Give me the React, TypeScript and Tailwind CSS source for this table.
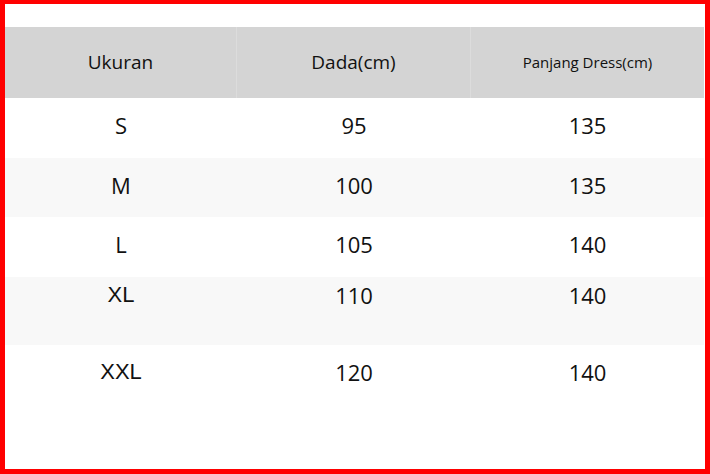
import React from "react";

const rows = [
  { size: "S", dada: "95", panjang: "135", bg: "bg-white", h: "h-[60px]", pt: "pt-[12px]" },
  { size: "M", dada: "100", panjang: "135", bg: "bg-[#f8f8f8]", h: "h-[59px]", pt: "pt-[12px]" },
  { size: "L", dada: "105", panjang: "140", bg: "bg-white", h: "h-[60px]", pt: "pt-[12px]" },
  { size: "XL", dada: "110", panjang: "140", bg: "bg-[#f8f8f8]", h: "h-[68px]", pt: "pt-[3px]" },
  { size: "XXL", dada: "120", panjang: "140", bg: "bg-white", h: "flex-1", pt: "pt-[12px]" },
];

export default function App() {
  return (
    <div className="w-[710px] h-[474px] bg-[#ff0000] pt-[4px] pl-[5px] pr-[5px] pb-[5px]">
      <div
        className="w-full h-full bg-white pt-[23px] pr-[1px] flex flex-col text-[#111]"
        style={{ fontFamily: '"Open Sans", "Noto Sans", sans-serif' }}
      >
        <div className="grid grid-cols-[232px_234px_1fr] h-[71px] bg-[#d4d4d4]">
          <div className="flex items-center justify-center text-[19px] border-r border-[#dcdcdc]">Ukuran</div>
          <div className="flex items-center justify-center text-[19px] border-r border-[#dcdcdc]">Dada(cm)</div>
          <div className="flex items-center justify-center text-[15px]">Panjang Dress(cm)</div>
        </div>
        {rows.map((r) => (
          <div key={r.size} className={`grid grid-cols-[232px_234px_1fr] ${r.bg} ${r.h} ${r.pt}`}>
            <div
              className={`text-center text-[22px] leading-[30px] ${r.size.startsWith("X") ? "font-['Liberation_Sans',Arial,sans-serif]" : ""}`}
            >
              {r.size}
            </div>
            <div className="text-center text-[22px] leading-[30px]">{r.dada}</div>
            <div className="text-center text-[22px] leading-[30px]">{r.panjang}</div>
          </div>
        ))}
      </div>
    </div>
  );
}
